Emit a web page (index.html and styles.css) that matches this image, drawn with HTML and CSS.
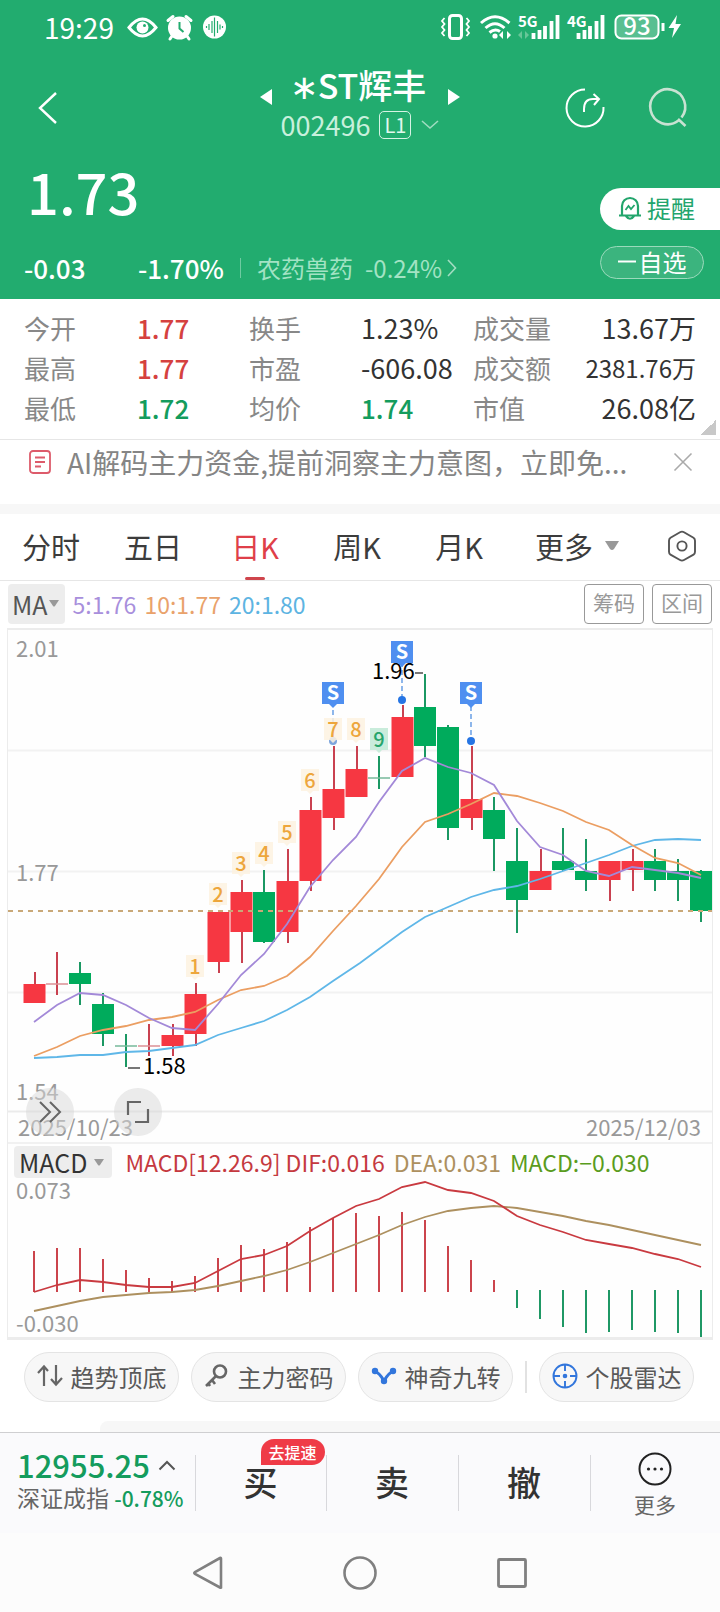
FILE: index.html
```html
<!DOCTYPE html>
<html lang="zh-CN">
<head>
<meta charset="utf-8">
<meta name="viewport" content="width=device-width, initial-scale=1">
<title>*ST辉丰 002496</title>
<link rel="stylesheet" href="styles.css">
</head>
<body>
<header class="header">
  <div class="status">
    <span class="time">19:29</span>
    <svg class="status-left" width="100" height="28" viewBox="127 13 100 28" aria-hidden="true">
      <path d="M129 27.500Q142.500 10.500 156 27.500Q142.500 44.500 129 27.500Z" fill="none" stroke="#fff" stroke-width="3"/>
      <circle cx="142.500" cy="27.500" r="6" fill="#fff"/><circle cx="144.500" cy="25.500" r="1.500" fill="#22ac6f"/>
      <circle cx="179.500" cy="28" r="11.500" fill="#fff"/>
      <path d="M168 20.500L173 16.500M191 20.500L186 16.500M172 36L170 39M187 36L189 39" stroke="#fff" stroke-width="3" stroke-linecap="round"/>
      <path d="M179.500 22V28.500L183.500 32" fill="none" stroke="#22ac6f" stroke-width="2"/>
      <circle cx="214.500" cy="27" r="11.500" fill="#fff"/>
      <path d="M206.500 26v2M209 24v6M212 21v12M214.500 17.500v19M217.500 21v12M220 24.500v5M222.500 26v2" stroke="#22ac6f" stroke-width="1.200"/>
    </svg>
    <svg class="status-right" width="242" height="30" viewBox="440 12 242 30" aria-hidden="true">
      <g fill="none" stroke="#fff">
        <rect x="449.500" y="15.500" width="12" height="23" rx="3" stroke-width="3"/>
        <path d="M444.500 18l-2.500 3 2.500 3-2.500 3 2.500 3-2.500 3 2.500 3M466.500 18l2.500 3-2.500 3 2.500 3-2.500 3 2.500 3-2.500 3" stroke-width="1.800"/>
        <path d="M481 23Q495 10.500 509.500 23M485.500 28Q495 19.500 504.500 28M489.500 32.500Q495 28 500 31.500" stroke-width="3"/>
        <path d="M533.500 39v-6M539.500 39v-9M545 39v-13M551.500 39v-18M557.500 39v-24M578.500 39v-6M584.500 39v-9M590 39v-13M596.500 39v-18M602.500 39v-24" stroke-width="3.800"/>
        <rect x="615.500" y="15.500" width="43" height="23" rx="6" fill="#58bf91" stroke-width="2"/>
        <path d="M663 23v8" stroke-width="3"/>
      </g>
      <g fill="#fff"><circle cx="495" cy="36" r="2.600"/><path d="M503 31v8l-4-4zM507 31v8l4-4zM677 15l-8.500 13h5.500l-2 10 9-14h-5.500z"/></g>
      <path d="M522 31v8l-4-4zM525 31v8l4-4z" fill="#68c698"/>
      <text class="net" x="518" y="27">5G</text><text class="net" x="567" y="27">4G</text>
      <text class="battery" x="637" y="35">93</text>
    </svg>
  </div>
  <nav class="nav">
    <button class="bare back" aria-label="返回"><svg width="24" height="34" viewBox="0 0 24 34"><path d="M20 2L4 17 20 32" fill="none" stroke="#fff" stroke-width="2.400"/></svg></button>
    <div class="title">
      <button class="bare" aria-label="上一只"><svg width="14" height="18" viewBox="0 0 14 18"><path d="M13 1v16L1 9z" fill="#fff"/></svg></button>
      <div class="names">
        <h1>∗ST辉丰</h1>
        <p class="code">002496<span class="level">L1</span><svg width="18" height="12" viewBox="0 0 18 12"><path d="M1 2l8 7 8-7" fill="none" stroke="#9fdcc0" stroke-width="1.600"/></svg></p>
      </div>
      <button class="bare" aria-label="下一只"><svg width="14" height="18" viewBox="0 0 14 18"><path d="M1 1v16L13 9z" fill="#fff"/></svg></button>
    </div>
    <div class="actions">
      <button class="bare" aria-label="分享"><svg width="42" height="42" viewBox="0 0 42 42"><g fill="none" stroke="#fff" stroke-width="2"><path d="M21 2.500A18.500 18.500 0 1 0 39.500 20"/><path d="M20 25v-3q0-10 9-10h6M29.500 7l5.500 5-5 6"/></g></svg></button>
      <button class="bare" aria-label="搜索"><svg width="42" height="42" viewBox="0 0 42 42"><path d="M31.500 33.500A17.500 17.500 0 1 1 34.500 30.500M31 32l7.500 7" fill="none" stroke="#c8e2d2" stroke-width="2.600"/></svg></button>
    </div>
  </nav>
  <section class="quote">
    <div>
      <p class="price">1.73</p>
      <p class="change"><span class="diff">-0.03</span><span class="pct">-1.70%</span><a class="sector" href="#">农药兽药 <span>-0.24%</span><svg width="10" height="18" viewBox="0 0 10 18"><path d="M1 1l7.500 8L1 17" fill="none" stroke="#a3ddc2" stroke-width="1.600"/></svg></a></p>
    </div>
    <div class="pills">
      <button class="remind"><svg width="24" height="26" viewBox="0 0 24 26"><g fill="none" stroke="#22a56c" stroke-width="2.200"><path d="M4 20V11a8 8 0 0 1 16 0v9M1 20.500h22M8 21q4 5.500 8 0"/><path d="M7.500 15l3-4 2.500 3 3.500-4" stroke-width="1.800"/></g></svg>提醒</button>
      <button class="watch"><svg width="18" height="3" viewBox="0 0 18 3"><path d="M0 1.500h18" stroke="#fff" stroke-width="2"/></svg>自选</button>
    </div>
  </section>
</header>

<main>
  <dl class="stats">
    <dt>今开</dt><dd class="up">1.77</dd><dt>换手</dt><dd>1.23%</dd><dt>成交量</dt><dd class="end">13.67万</dd>
    <dt>最高</dt><dd class="up">1.77</dd><dt>市盈</dt><dd>-606.08</dd><dt>成交额</dt><dd class="end tight">2381.76万</dd>
    <dt>最低</dt><dd class="down">1.72</dd><dt>均价</dt><dd class="down">1.74</dd><dt>市值</dt><dd class="end">26.08亿</dd>
  </dl>
  <div class="notice">
    <svg width="22" height="24" viewBox="0 0 22 24" aria-hidden="true"><g fill="none" stroke="#dd5b6b" stroke-width="1.800"><rect x="1" y="1" width="20" height="22" rx="3"/><path d="M6 7.500h10M6 12h10M6 16.500h6"/></g></svg>
    <a class="notice-text" href="#">AI解码主力资金,提前洞察主力意图，立即免...</a>
    <button class="bare" aria-label="关闭"><svg width="20" height="20" viewBox="0 0 20 20"><path d="M1.500 1.500l17 17M18.500 1.500l-17 17" stroke="#aaa" stroke-width="1.600"/></svg></button>
  </div>
  <nav class="tabs">
    <button>分时</button><button>五日</button><button class="active">日K</button><button>周K</button><button>月K</button>
    <button class="more">更多<svg width="14" height="10" viewBox="0 0 14 10"><path d="M0 0h14L9 8q-2 2-4 0z" fill="#999"/></svg></button>
    <button aria-label="设置"><svg width="30" height="32" viewBox="0 0 30 32"><g fill="none" stroke="#555" stroke-width="1.900"><path d="M13 2.200q2-1.200 4 0l9.500 5.500q1.500 1 1.500 3v11q0 2-1.500 3L17 30q-2 1.200-4 0l-9.500-5.300q-1.500-1-1.500-3v-11q0-2 1.500-3z"/><circle cx="15" cy="16" r="4.600"/></g></svg></button>
  </nav>
  <div class="indicators">
    <button class="pick ma">MA<svg width="10" height="7" viewBox="0 0 10 7"><path d="M0 0h10L6 6q-1 1-2 0z" fill="#999"/></svg></button>
    <span class="ma5">5:1.76</span><span class="ma10">10:1.77</span><span class="ma20">20:1.80</span>
    <button class="outlined first">筹码</button><button class="outlined">区间</button>
  </div>

  <section class="charts">
    <div class="kline">
      <svg class="plot" viewBox="8 630 704 514" role="img" aria-label="日K线">
        <path d="M8 750.500H712M8 871.500H712M8 992.500H712" stroke="#f2f2f2" stroke-width="2"/>
        <path d="M8 1111.500H712" stroke="#ebebeb" stroke-width="2"/>
        <path d="M8 1143H712" stroke="#f1f1f1" stroke-width="2"/>
        <g class="axis">
          <text x="16" y="657">2.01</text><text x="16" y="881">1.77</text><text x="16" y="1100">1.54</text>
          <text x="18" y="1136">2025/10/23</text><text x="701" y="1136" text-anchor="end">2025/12/03</text>
        </g>
        <path d="M333 702v36M402 662v38M471 706v32" stroke="#72a5e6" stroke-width="1.600" stroke-dasharray="5 3"/>
        <g stroke-width="2" fill="none">
          <path stroke="#c94150" d="M35 972V1003M57 952V995M149 1024V1056M173 1024V1056M196 983V1046M219 912V973M242 880V963M288 849V943M311 797V891M334 746V830M357 746V797M403 705V777M472 746V830M541 849V890M610 861V901M633 849V891"/>
          <path stroke="#1b9863" d="M80 962V1005M103 993V1046M126 1034V1067M264 870V943M379 756V789M425 674V757M448 725V840M494 797V871M517 828V933M563 828V871M586 839V891M655 849V891M678 859V901M701 870V922"/>
          <path stroke="#dc9095" stroke-width="1.500" d="M46 984h22M138 1046h22"/>
          <path stroke="#77b99a" stroke-width="1.500" d="M115 1046h22M368 778h22"/>
        </g>
        <path fill="#f63742" d="M23.500 984h22v19h-22zM161.500 1035h22v11h-22zM184.500 994h22v40h-22zM207.500 912h22v50h-22zM230.500 892h22v40h-22zM276.500 881h22v51h-22zM299.500 810h22v71h-22zM322.500 789h22v29h-22zM345.500 769h22v28h-22zM391.500 717h22v60h-22zM460.500 799h22v19h-22zM529.500 871h22v19h-22zM598.500 861h22v19h-22zM621.500 861h22v9h-22z"/>
        <path fill="#00ab5c" d="M69 973h22v11h-22zM92 1004h22v30h-22zM253 892h22v50h-22zM414 707h22v39h-22zM437 727h22v101h-22zM483 810h22v29h-22zM506 861h22v39h-22zM552 861h22v9h-22zM575 871h22v9h-22zM644 861h22v19h-22zM667 871h22v9h-22zM690 871h22v40h-22z"/>
        <path d="M8 911H712" stroke="#c9a878" stroke-width="1.800" stroke-dasharray="5 5"/>
        <g fill="none" stroke-width="1.800">
          <polyline stroke="#5fb7e8" points="34,1058 57,1057 80,1055 103,1055 126,1052 149,1051 172,1048 195,1045 218,1035 241,1028 264,1021 287,1010 310,997 333,981 360,963 402,932 425,917 448,907 471,897 494,890 517,886 540,879 563,871 586,863 609,855 632,846 655,840 678,839 701,840"/>
          <polyline stroke="#eb9e62" points="34,1056 57,1047 80,1036 103,1030 126,1026 149,1020 172,1017 195,1012 218,1000 241,990 264,986 287,976 310,957 333,931 356,906 379,879 402,847 425,822 448,814 471,804 494,793 517,796 540,803 563,811 586,822 609,830 632,845 655,858 678,863 701,875"/>
          <polyline stroke="#a389d8" points="34,1022 57,1005 80,993 103,995 126,1005 149,1018 172,1028 195,1030 218,1004 241,975 264,954 287,924 310,887 333,860 356,837 379,802 402,771 425,758 448,767 471,773 494,785 517,821 540,847 563,855 586,871 609,876 632,867 655,870 678,873 701,878"/>
        </g>
        <g fill="#2675e4"><circle cx="333" cy="741" r="4" fill="#7da5dc"/><circle cx="402" cy="700" r="4"/><circle cx="471" cy="741" r="4"/></g>
        <path fill="#fdf2e1" fill-opacity=".85" d="M186 955h18v22h-6l-3 3-3-3h-6zM209 883h18v22h-6l-3 3-3-3h-6zM232 852h18v22h-6l-3 3-3-3h-6zM255 842h18v22h-6l-3 3-3-3h-6zM278 821h18v22h-6l-3 3-3-3h-6zM301 769h18v22h-6l-3 3-3-3h-6zM324 718h18v22h-6l-3 3-3-3h-6zM347 718h18v22h-6l-3 3-3-3h-6z"/>
        <path fill="#c9ecdb" d="M370 728h18v22h-6l-3 3-3-3h-6z"/>
        <g class="count">
          <text x="195" y="974">1</text><text x="218" y="902">2</text><text x="241" y="871">3</text><text x="264" y="861">4</text><text x="287" y="840">5</text><text x="310" y="788">6</text><text x="333" y="737">7</text><text x="356" y="737">8</text><text class="nine" x="379" y="747">9</text>
        </g>
        <path fill="#4f8ff0" d="M322 682h22v22h-7l-4 4-4-4h-7zM391 641h22v22h-7l-4 4-4-4h-7zM460 682h22v22h-7l-4 4-4-4h-7z"/>
        <g class="signal"><text x="333" y="700">S</text><text x="402" y="659">S</text><text x="471" y="700">S</text></g>
        <path d="M415 673h8M128 1068h12" stroke="#777" stroke-width="2"/>
        <g class="extreme"><text x="372" y="679">1.96</text><text x="143" y="1074">1.58</text></g>
      </svg>
      <div class="tools">
        <button aria-label="快进"><svg width="24" height="24" viewBox="0 0 24 24"><path d="M2 2l10 10L2 22M12 2l10 10-10 10" fill="none" stroke="#666" stroke-width="2"/></svg></button>
        <button aria-label="全屏"><svg width="24" height="24" viewBox="0 0 24 24"><path d="M2 15V2h13M22 9v13H9" fill="none" stroke="#666" stroke-width="2.200"/></svg></button>
      </div>
    </div>
    <div class="macd-head">
      <button class="pick macd">MACD<svg width="10" height="7" viewBox="0 0 10 7"><path d="M0 0h10L6 6q-1 1-2 0z" fill="#999"/></svg></button>
      <span class="dif">MACD[12.26.9] DIF:0.016</span><span class="dea">DEA:0.031</span><span class="bar">MACD:−0.030</span>
    </div>
    <svg class="plot" viewBox="8 1180 704 157" role="img" aria-label="MACD">
      <g class="axis"><text x="16" y="1199">0.073</text><text x="16" y="1332">-0.030</text></g>
      <path stroke="#cb444c" stroke-width="2" d="M34 1251V1292M57 1248V1292M80 1248V1292M103 1259V1292M126 1270V1292M149 1278V1292M172 1281V1292M195 1276V1292M218 1258V1292M241 1245V1292M264 1249V1292M287 1242V1292M310 1227V1292M333 1218V1292M356 1213V1292M379 1216V1292M402 1212V1292M425 1220V1292M448 1246V1292M471 1260V1292M494 1280V1292"/>
      <path stroke="#1f9865" stroke-width="2" d="M517 1290V1308M540 1290V1319M563 1290V1327M586 1290V1333M609 1290V1332M632 1290V1330M655 1290V1332M678 1290V1333M701 1290V1337"/>
      <g fill="none" stroke-width="1.800">
        <polyline stroke="#ad905f" points="34,1311 57,1306 80,1301 103,1297 126,1295 149,1293 172,1292 195,1290 218,1286 241,1281 264,1276 287,1270 310,1262 333,1253 356,1244 379,1235 402,1225 425,1217 448,1211 471,1208 494,1206 517,1208 540,1212 563,1216 586,1221 609,1225 632,1230 655,1235 678,1240 701,1245"/>
        <polyline stroke="#c93a40" points="34,1292 57,1285 80,1280 103,1282 126,1285 149,1287 172,1287 195,1283 218,1271 241,1259 264,1255 287,1246 310,1231 333,1218 356,1206 379,1199 402,1187 425,1182 448,1190 471,1193 494,1201 517,1216 540,1225 563,1232 586,1240 609,1244 632,1248 655,1254 678,1259 701,1267"/>
      </g>
    </svg>
  </section>

  <div class="chips">
    <button><svg width="26" height="24" viewBox="0 0 26 24"><path d="M7 22V3M1 9l6-6.500L11 7M19 1v19M14 15l5 5.500L25 14" fill="none" stroke="#666" stroke-width="2.200"/></svg>趋势顶底</button>
    <button><svg width="26" height="24" viewBox="0 0 26 24"><g fill="none" stroke="#666" stroke-width="2.600"><circle cx="16" cy="7.500" r="6"/><path d="M12 12L2 22M8 16l3 4M4 19l2 3"/></g></svg>主力密码</button>
    <button><svg width="26" height="24" viewBox="0 0 26 24"><path d="M4 8q4 0 9 9 5-9 9-9" fill="none" stroke="#3276dc" stroke-width="3"/><g fill="#3276dc"><circle cx="4" cy="7" r="3.200"/><circle cx="22" cy="7" r="3.200"/><circle cx="13" cy="17" r="3.200"/></g></svg>神奇九转</button>
    <span class="chip-sep"></span>
    <button><svg width="26" height="26" viewBox="0 0 26 26"><g fill="none" stroke="#3276dc" stroke-width="1.900"><circle cx="13" cy="13" r="11.500"/><path d="M13 2v6M13 18v6M2 13h6M18 13h6"/></g><circle cx="13" cy="13" r="2.300" fill="#3276dc"/></svg>个股雷达</button>
  </div>
  <div class="next-panel"></div>
</main>

<footer>
  <div class="trade">
    <a class="index" href="#">
      <span class="index-value">12955.25<svg width="18" height="11" viewBox="0 0 18 11"><path d="M1.500 9.500L9 2l7.500 7.500" fill="none" stroke="#555" stroke-width="2"/></svg></span>
      <span class="index-name">深证成指 <b>-0.78%</b></span>
    </a>
    <button>买<span class="badge">去提速</span></button>
    <button>卖</button>
    <button>撤</button>
    <button class="more-cell"><svg width="34" height="34" viewBox="0 0 34 34"><circle cx="17" cy="17" r="15.500" fill="none" stroke="#222" stroke-width="2"/><g fill="#222"><circle cx="10.500" cy="17" r="1.600"/><circle cx="17" cy="17" r="1.600"/><circle cx="23.500" cy="17" r="1.600"/></g></svg>更多</button>
  </div>
  <div class="system">
    <button class="bare" aria-label="返回"><svg width="34" height="34" viewBox="0 0 34 34"><path d="M30 2.500v29a1 1 0 0 1-1 0L4 18q-1.500-1 0-2L29 2q1-.500 1 .500z" fill="none" stroke="#808080" stroke-width="2.600"/></svg></button>
    <button class="bare" aria-label="主页"><svg width="34" height="34" viewBox="0 0 34 34"><circle cx="17" cy="17" r="15.500" fill="none" stroke="#808080" stroke-width="2.600"/></svg></button>
    <button class="bare" aria-label="最近任务"><svg width="34" height="34" viewBox="0 0 34 34"><rect x="3.500" y="3.500" width="27" height="27" rx="1" fill="none" stroke="#808080" stroke-width="2.800"/></svg></button>
  </div>
</footer>
</body>
</html>
```
FILE: styles.css
```css
* { box-sizing: border-box; }
body {
  margin: 0;
  background: #fff;
  color: #333;
  font-family: "Noto Sans CJK SC", sans-serif;
}
h1, p, dl, dd { margin: 0; }
button {
  margin: 0;
  padding: 0;
  border: 0;
  background: none;
  color: inherit;
  font: inherit;
}
a { color: inherit; text-decoration: none; }
svg { display: block; flex: none; overflow: visible; }
.bare { display: flex; }

/* Header */
.header { background: #22ac6f; color: #fff; }
.status { display: flex; align-items: center; height: 56px; padding: 0 38px 2px 44px; }
.time { width: 83px; font-size: 28px; line-height: 50px; }
.status-right { margin-left: auto; }
.net { fill: #fff; font-size: 15px; font-weight: 700; }
.battery { fill: #fff; font-size: 24px; font-weight: 500; text-anchor: middle; }

.nav { display: grid; grid-template-columns: 1fr auto 1fr; align-items: center; height: 96px; }
.back { padding: 8px 0 0 36px; }
.title { display: flex; align-items: flex-start; gap: 8px; }
.title > .bare { padding-top: 24px; }
.names { text-align: center; }
h1 { padding-right: 4px; font-size: 34px; font-weight: 500; line-height: 42px; }
.code {
  display: flex;
  align-items: center;
  color: #c8f0dc;
  font-size: 27px;
  line-height: 38px;
}
.level {
  margin: 0 10px 0 9px;
  padding: 0 4px;
  border: 1px solid #d6f3e4;
  border-radius: 5px;
  color: #e2f8ed;
  font-size: 20px;
  line-height: 26px;
}
.actions { display: flex; justify-content: flex-end; gap: 41px; padding: 8px 31px 0 0; }

.quote { display: flex; justify-content: space-between; height: 147px; }
.price { padding: 9px 0 0 27px; font-size: 56px; font-weight: 500; line-height: 60px; }
.change { display: flex; align-items: center; padding: 30px 0 0 24px; font-size: 26px; font-weight: 500; line-height: 34px; }
.diff { width: 114px; }
.pct { width: 102px; }
.sector {
  display: flex;
  align-items: center;
  border-left: 1px solid #6ecba1;
  padding-left: 16px;
  color: #a3e3c4;
  font-size: 24px;
  font-weight: 400;
  line-height: 20px;
}
.sector span { margin: 0 5px 0 12px; }
.pills { width: 120px; padding-top: 36px; }
.remind, .watch { display: flex; align-items: center; }
.remind {
  gap: 5px;
  width: 100%;
  height: 42px;
  padding: 0 0 3px 18px;
  border-radius: 21px 0 0 21px;
  background: #fff;
  color: #22a56c;
  font-size: 24px;
}
.watch {
  justify-content: center;
  gap: 3px;
  width: 104px;
  height: 33px;
  margin-top: 16px;
  padding-bottom: 3px;
  border: 1px solid #9bdabc;
  border-radius: 17px;
  background: #3bb47e;
  font-size: 24px;
}

/* Key figures */
.stats {
  display: grid;
  grid-template-columns: 113fr 112fr 112fr 112fr 90fr 133fr;
  padding: 9px 24px 11px 24px;
  border-bottom: 1px solid #e6e6e6;
  background: linear-gradient(135deg, transparent 50%, #c8c8c8 50%) right 4px bottom 4px / 15px 15px no-repeat;
  font-size: 27px;
  line-height: 40px;
}
dt { color: #888; font-size: 26px; white-space: nowrap; }
dd { white-space: nowrap; }
.end { text-align: right; }
.tight { font-size: 24px; }
.up, .down { font-size: 26px; font-weight: 500; }
.up { color: #d5413f; }
.down { color: #149c5d; }

.notice { display: flex; align-items: center; height: 64px; padding: 0 27px 20px 29px; }
.notice-text { flex: 1; min-width: 0; padding-left: 16px; color: #858585; font-size: 28px; line-height: 40px; white-space: nowrap; }

/* Period tabs */
.tabs {
  display: grid;
  grid-template-columns: repeat(5, 102fr) 134fr 76fr;
  height: 77px;
  border-top: 10px solid #f7f7f7;
  border-bottom: 1px solid #e6e6e6;
  color: #3c3c3c;
  font-size: 29px;
}
.tabs button { display: flex; align-items: center; justify-content: center; position: relative; padding-bottom: 3px; }
.tabs .more { gap: 12px; }
.tabs .active { color: #df3f49; }
.active::after {
  content: "";
  position: absolute;
  bottom: 0;
  width: 20px;
  height: 3px;
  border-radius: 2px;
  background: #cf454c;
}

.indicators { display: flex; align-items: center; gap: 8px; height: 47px; padding: 0 8px 2px; font-size: 23px; }
.pick {
  display: flex;
  align-items: center;
  border-radius: 4px;
  background: #ededed;
  color: #555;
  font-size: 25px;
}
.ma { gap: 1px; height: 40px; padding: 0 6px 0 4px; }
.ma5 { color: #a88fdc; }
.ma10 { color: #e9a26b; }
.ma20 { color: #5db4e2; }
.outlined {
  width: 60px;
  height: 40px;
  padding-bottom: 3px;
  border: 1px solid #999;
  border-radius: 4px;
  color: #999;
  font-size: 21px;
}
.first { margin-left: auto; }

/* Charts */
.charts {
  margin: 0 7px;
  border: solid #ececec;
  border-width: 2px 1px 3px;
  background: #fefefe;
}
.kline { position: relative; }
.plot { width: 100%; height: auto; }
.axis { fill: #999; font-size: 22px; }
.count { fill: #eda63c; font-size: 20px; font-weight: 500; text-anchor: middle; }
.nine { fill: #27a56b; }
.signal { fill: #fff; font-size: 20px; font-weight: 700; text-anchor: middle; }
.extreme { fill: #000; font-size: 22px; }
.tools { position: absolute; bottom: 8px; left: 18px; display: flex; gap: 40px; }
.tools button {
  display: grid;
  place-items: center;
  width: 48px;
  height: 48px;
  border-radius: 50%;
  background: rgba(215, 215, 215, .5);
}
.macd-head { display: flex; align-items: center; height: 36px; padding-left: 6px; font-size: 23px; white-space: nowrap; }
.macd { gap: 7px; height: 32px; margin-right: 13px; padding: 0 8px 0 5px; color: #333; }
.dif { color: #c5393f; }
.dea { margin: 0 9px; color: #ad905f; }
.bar { color: #5a9c1d; }

.chips { display: flex; gap: 12px; padding: 12px 26px 19px 24px; font-size: 24px; color: #595959; }
.chips button {
  display: flex;
  flex: 1;
  align-items: center;
  justify-content: center;
  gap: 8px;
  height: 50px;
  padding-bottom: 2px;
  border: 1px solid #e4e4e4;
  border-radius: 25px;
  background: #f7f7f7;
  white-space: nowrap;
}
.chip-sep { width: 2px; height: 32px; margin-top: 9px; background: #e2e2e2; }
.next-panel { height: 11px; margin-left: 100px; border-radius: 8px 0 0; background: #f7f7f7; }

/* Trading bar */
.trade {
  display: grid;
  grid-template-columns: 195fr 131fr 132fr 132fr 130fr;
  height: 101px;
  border-top: 1px solid #cfcfd1;
  background: #fafafc;
}
.trade > * { position: relative; }
.trade button { padding-bottom: 4px; font-size: 34px; font-weight: 500; }
.trade button::before {
  content: "";
  position: absolute;
  top: 22px;
  left: 0;
  width: 1px;
  height: 56px;
  background: #d8d8dc;
}
.index { display: flex; flex-direction: column; padding: 16px 0 0 17px; white-space: nowrap; }
.index-value { display: flex; align-items: center; gap: 8px; color: #149c5d; font-size: 31px; font-weight: 500; line-height: 32px; }
.index-name { color: #666; font-size: 23px; line-height: 32px; }
.index-name b { color: #149c5d; font-size: 21px; font-weight: 500; }
.badge {
  position: absolute;
  top: 6px;
  left: 50%;
  width: 64px;
  border-radius: 13px 13px 13px 0;
  background: #ef3b47;
  color: #fff;
  font-size: 16px;
  line-height: 26px;
}
.trade .more-cell {
  display: flex;
  flex-direction: column;
  align-items: center;
  padding-top: 19px;
  color: #666;
  font-size: 21px;
  font-weight: 400;
  line-height: 36px;
}
.system { display: flex; justify-content: center; align-items: center; gap: 118px; height: 80px; background: #fcfcfc; }
```
